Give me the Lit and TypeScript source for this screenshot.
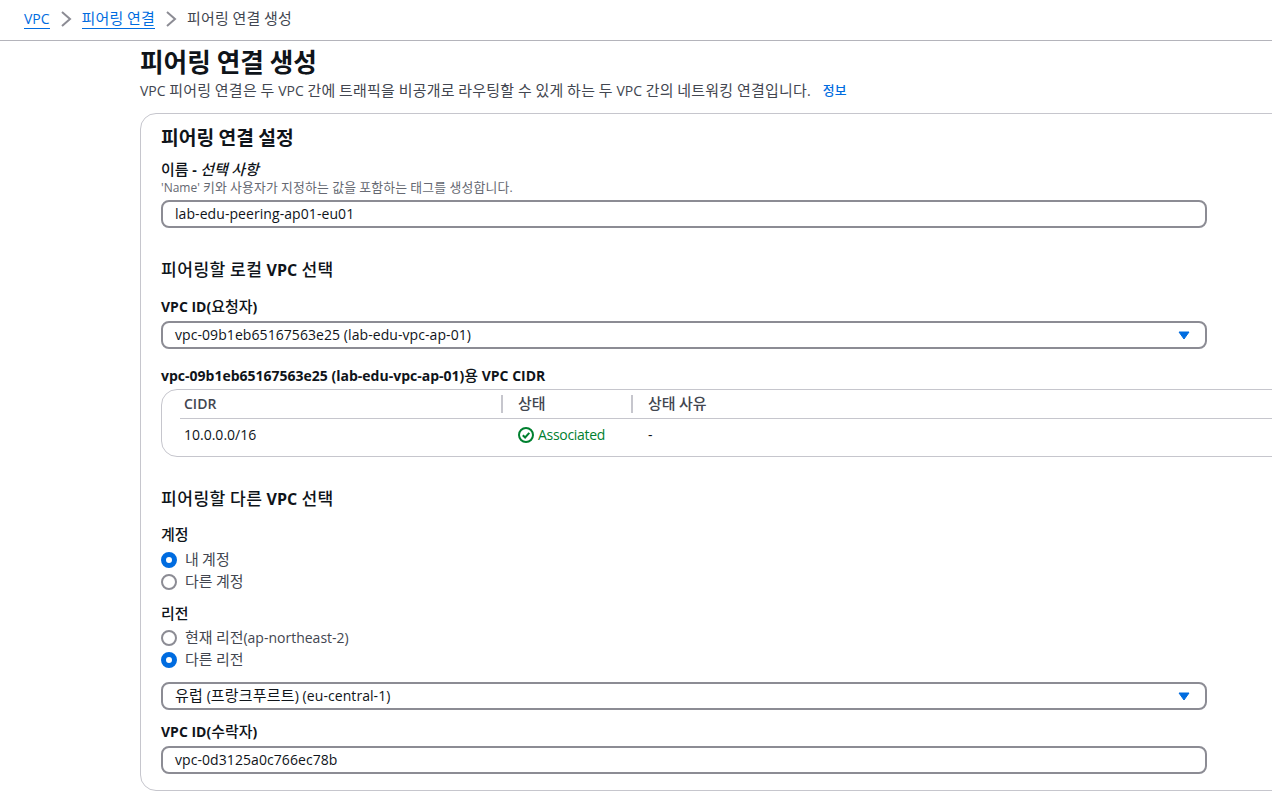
import { LitElement, html, css } from "lit";
import { customElement } from "lit/decorators.js";

const k = (text: string) =>
  text
    .split(/([가-힣]+(?:\s+[가-힣]+)*)/)
    .map((part, i) => (i % 2 ? html`<span class="k">${part}</span>` : part));

@customElement("app-root")
export class AppRoot extends LitElement {
  static styles = css`
    :host {
      display: block;
      width: 1272px;
      height: 799px;
      overflow: hidden;
      background: #fff;
      color: #0f141a;
      font-family: "Open Sans", "Noto Sans CJK KR", sans-serif;
      font-size: 14px;
      line-height: 20px;
    }
    * { box-sizing: border-box; }
    .k { font-family: "Noto Sans CJK KR", sans-serif; font-size: 1.07em; line-height: 1; }
    .crumbs {
      height: 41px;
      border-bottom: 1px solid #b4b4bb;
      display: flex;
      align-items: center;
      padding: 0 0 2px 24px;
      color: #424650;
    }
    .crumbs .k, .desc .k, .field .k { letter-spacing: 0.2px; }
    .sub .k { letter-spacing: 0.24px; }
    .crumbs a { color: #006ce0; border-bottom: 1px solid #006ce0; line-height: 18px; }
    .crumbs svg { margin: 0 8px; display: block; }
    .main { padding-left: 140px; }
    h1 { margin: 7px 0 0; font-size: 24px; line-height: 28px; font-weight: 700; }
    .sub { margin-top: 4px; display: flex; gap: 12px; color: #424650; height: 20px; }
    .info { color: #006ce0; font-size: 12px; font-weight: 500; }
    .card {
      margin-top: 12px;
      width: 1200px;
      height: 678px;
      border: 1px solid #c6c6cd;
      border-radius: 16px;
      padding: 12px 20px 0;
    }
    h2 { margin: 0; font-size: 18px; line-height: 24px; font-weight: 700; }
    h3 { margin: 0; font-size: 16px; line-height: 20px; font-weight: 700; }
    h3 .k { font-weight: 500; letter-spacing: 0.45px; }
    .label { font-weight: 700; line-height: 20px; }
    .label .k { font-weight: 500; }
    .label i .k { font-weight: 500; }
    .desc { font-size: 12px; line-height: 16px; color: #656871; }
    .field {
      width: 1046px;
      height: 28px;
      border: 2px solid #8c8c94;
      border-radius: 8px;
      padding: 0 12px;
      display: flex;
      align-items: center;
      justify-content: space-between;
      font-size: 14px;
      letter-spacing: 0.07px;
    }
    .field svg { display: block; margin-right: 3px; }
    .name-label { margin-top: 10px; }
    .name-field { margin-top: 4px; }
    .local { margin-top: 32px; }
    .req { margin-top: 17px; }
    .req-field { margin-top: 4px; }
    .cidr-label { margin-top: 17px; }
    .table {
      margin-top: 3px;
      width: 1150px;
      height: 68px;
      border: 1px solid #c6c6cd;
      border-radius: 16px;
      padding: 0 18px;
    }
    .row { display: grid; align-items: center; }
    .head {
      grid-template-columns: 321px 130px 1fr;
      height: 29px;
      border-bottom: 1px solid #c6c6cd;
      color: #424650;
      font-weight: 600;
    }
    .head .k { font-weight: 500; }
    .head > div { padding-left: 4px; height: 18px; line-height: 18px; }
    .head > div + div { border-left: 2px solid #c6c6cd; padding-left: 15px; }
    .body { height: 32px; padding-left: 4px; grid-template-columns: 334px 130px 1fr; }
    .status { color: #00802f; display: flex; align-items: center; gap: 4px; letter-spacing: -0.3px; }
    .other { margin-top: 32px; }
    .acct { margin-top: 16px; }
    .radios { margin-top: 5px; display: flex; flex-direction: column; gap: 2px; }
    .radios.r2 { margin-top: 4px; }
    .radio { display: flex; align-items: center; gap: 8px; height: 20px; color: #424650; }
    .dot { width: 16px; height: 16px; border-radius: 50%; border: 2px solid #8c8c94; flex: none; }
    .dot.on { border: 5px solid #006ce0; }
    .region { margin-top: 12px; }
    .region-field { margin-top: 12px; }
    .peer { margin-top: 12px; }
    .peer-field { margin-top: 4px; }
  `;

  private chev() {
    return html`<svg width="16" height="16" viewBox="0 0 16 16" fill="none" stroke="#8c8c94" stroke-width="2"><path d="M4 1l8 7-8 7"/></svg>`;
  }

  private caret() {
    return html`<svg width="12" height="9" viewBox="0 0 12 9"><path d="M1 1h10L6 8z" fill="#006ce0" stroke="#006ce0" stroke-linejoin="round"/></svg>`;
  }

  private radio(label: string, on = false) {
    return html`<div class="radio"><span class="dot ${on ? "on" : ""}"></span><span>${k(label)}</span></div>`;
  }

  render() {
    return html`
      <nav class="crumbs">
        <a>VPC</a>${this.chev()}<a>${k("피어링 연결")}</a>${this.chev()}<span>${k("피어링 연결 생성")}</span>
      </nav>
      <main class="main">
        <h1>${k("피어링 연결 생성")}</h1>
        <div class="sub">
          <span>${k("VPC 피어링 연결은 두 VPC 간에 트래픽을 비공개로 라우팅할 수 있게 하는 두 VPC 간의 네트워킹 연결입니다.")}</span>
          <span class="info">${k("정보")}</span>
        </div>
        <section class="card">
          <h2>${k("피어링 연결 설정")}</h2>
          <div class="label name-label">${k("이름")} - <i>${k("선택 사항")}</i></div>
          <div class="desc">${k("'Name' 키와 사용자가 지정하는 값을 포함하는 태그를 생성합니다.")}</div>
          <div class="field name-field">lab-edu-peering-ap01-eu01</div>

          <h3 class="local">${k("피어링할 로컬 VPC 선택")}</h3>
          <div class="label req">${k("VPC ID(요청자)")}</div>
          <div class="field req-field"><span>vpc-09b1eb65167563e25 (lab-edu-vpc-ap-01)</span>${this.caret()}</div>
          <div class="label cidr-label">${k("vpc-09b1eb65167563e25 (lab-edu-vpc-ap-01)용 VPC CIDR")}</div>
          <div class="table">
            <div class="row head"><div>CIDR</div><div>${k("상태")}</div><div>${k("상태 사유")}</div></div>
            <div class="row body">
              <div>10.0.0.0/16</div>
              <div class="status">
                <svg width="16" height="16" viewBox="0 0 16 16" fill="none" stroke="#00802f" stroke-width="2"><circle cx="8" cy="8" r="7"/><path d="M4.8 8.2l2.3 2.3 4.2-4.7"/></svg>
                Associated
              </div>
              <div>-</div>
            </div>
          </div>

          <h3 class="other">${k("피어링할 다른 VPC 선택")}</h3>
          <div class="label acct">${k("계정")}</div>
          <div class="radios">${this.radio("내 계정", true)}${this.radio("다른 계정")}</div>
          <div class="label region">${k("리전")}</div>
          <div class="radios r2">${this.radio("현재 리전(ap-northeast-2)")}${this.radio("다른 리전", true)}</div>
          <div class="field region-field"><span>${k("유럽 (프랑크푸르트) (eu-central-1)")}</span>${this.caret()}</div>
          <div class="label peer">${k("VPC ID(수락자)")}</div>
          <div class="field peer-field">vpc-0d3125a0c766ec78b</div>
        </section>
      </main>
    `;
  }
}
